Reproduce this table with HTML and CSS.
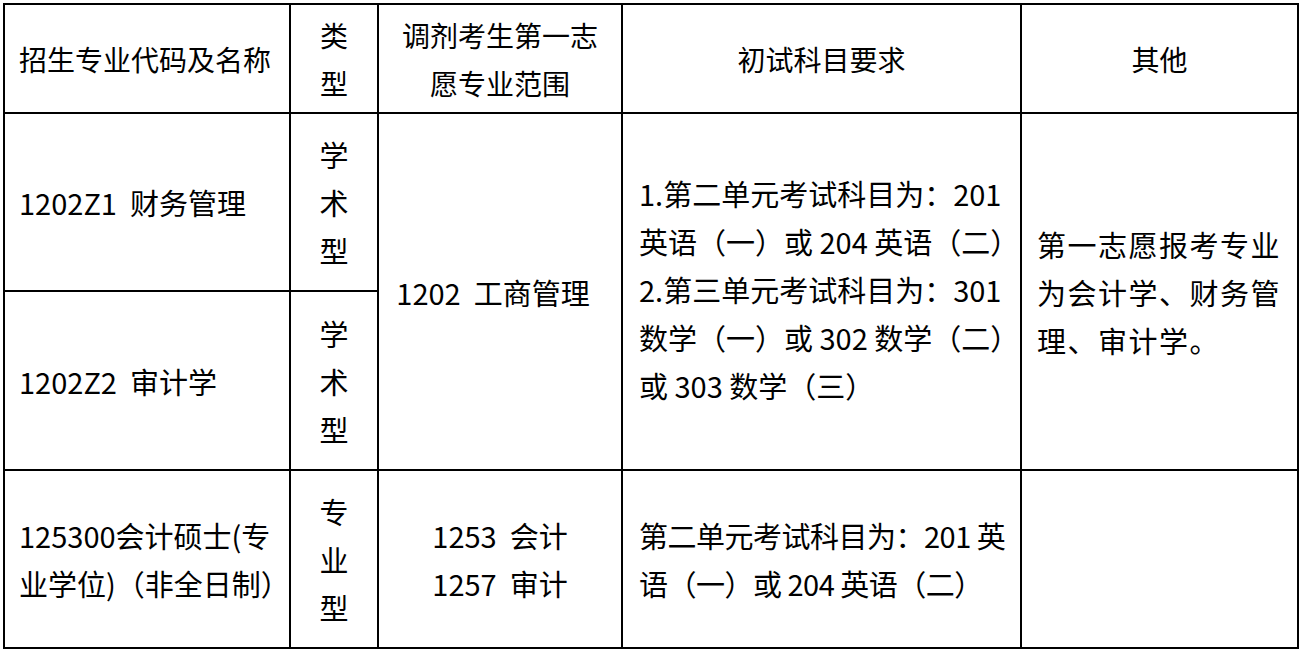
FILE: index.html
```html
<!DOCTYPE html>
<html lang="zh-CN">
<head>
<meta charset="utf-8">
<title>调剂要求</title>
<link rel="stylesheet" href="styles.css">
</head>
<body>
<div class="table">
  <div class="cell head left c1">招生专业代码及名称</div>
  <div class="cell head center c2">类<br>型</div>
  <div class="cell head center c3">调剂考生第一志<br>愿专业范围</div>
  <div class="cell head center c4">初试科目要求</div>
  <div class="cell head center c5">其他</div>

  <div class="cell left c1 r1">1202Z1&nbsp;&nbsp;财务管理</div>
  <div class="cell center c2 r1">学<br>术<br>型</div>
  <div class="cell center c3 r12 shift">1202&nbsp;&nbsp;工商管理</div>
  <div class="cell left c4 r12 raise">1.第二单元考试科目为：201<br>英语（一）或 204 英语（二）<br>2.第三单元考试科目为：301<br>数学（一）或 302 数学（二）<br>或 303 数学（三）</div>
  <div class="cell left c5 r12 spread">第一志愿报考专业<br>为会计学、财务管<br>理、审计学。</div>

  <div class="cell left c1 r2">1202Z2&nbsp;&nbsp;审计学</div>
  <div class="cell center c2 r2">学<br>术<br>型</div>

  <div class="cell left c1 r3">125300会计硕士(专<br>业学位)（非全日制）</div>
  <div class="cell center c2 r3">专<br>业<br>型</div>
  <div class="cell center c3 r3">1253&nbsp;&nbsp;会计<br>1257&nbsp;&nbsp;审计</div>
  <div class="cell left c4 r3 tight">第二单元考试科目为：201 英<br>语（一）或 204 英语（二）</div>
  <div class="cell c5 r3"></div>
</div>
</body>
</html>
```

FILE: styles.css
```css
html, body {
  margin: 0;
  padding: 0;
  background: #fff;
}

body {
  padding: 3px 0 0 3px;
  font-family: "Noto Sans CJK SC", "Noto Sans", sans-serif;
  color: #000;
}

.table {
  display: grid;
  grid-template-columns: 284px 86px 242px 397px 275px;
  grid-template-rows: 107px 176px 177px 176px;
  gap: 2px;
  padding: 2px;
  background: #000;
  width: max-content;
}

.cell {
  background: #fff;
  display: flex;
  flex-direction: column;
  justify-content: center;
  font-size: 29px;
  line-height: 48px;
  white-space: nowrap;
}

.head {
  font-size: 28px;
}

.left {
  align-items: flex-start;
  text-align: left;
  padding-left: 14px;
}

.c4.left {
  padding-left: 16px;
}

.c5.left {
  padding-left: 15px;
}

.center {
  align-items: center;
  text-align: center;
}

.shift {
  padding-right: 14px;
}

.raise {
  padding-bottom: 6px;
}

.tight {
  letter-spacing: -0.5px;
}

.spread {
  letter-spacing: 1.5px;
}

.c1 { grid-column: 1; }
.c2 { grid-column: 2; }
.c3 { grid-column: 3; }
.c4 { grid-column: 4; }
.c5 { grid-column: 5; }

.head { grid-row: 1; }
.r1 { grid-row: 2; }
.r2 { grid-row: 3; }
.r12 { grid-row: 2 / span 2; }
.r3 { grid-row: 4; }
```
